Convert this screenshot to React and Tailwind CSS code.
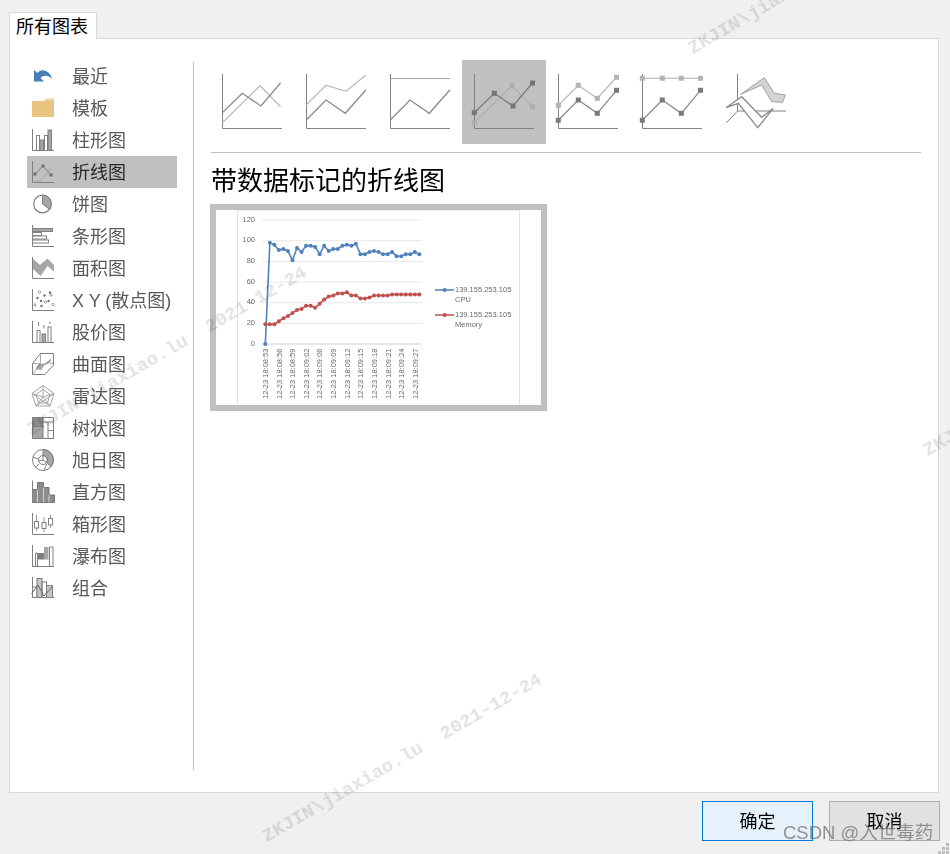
import React from 'react';

const CPU = [0, 98, 96, 91, 92, 90, 81, 93, 89, 95, 95, 94, 87, 95, 90, 92, 92, 95, 96, 95, 97, 87, 87, 89, 90, 89, 87, 87, 89, 85, 85, 87, 87, 89, 87];
const MEMORY = [19, 19, 19, 22, 25, 27, 30, 33, 34, 37, 37, 35, 39, 43, 46, 47, 49, 49, 50, 47, 47, 44, 44, 45, 47, 47, 47, 47, 48, 48, 48, 48, 48, 48, 48];
const TIMES = ['08:53', '08:56', '08:59', '09:02', '09:06', '09:09', '09:12', '09:15', '09:18', '09:21', '09:24', '09:27'];
const TICKS = [120, 100, 80, 60, 40, 20, 0];

const DARK = '#808080';
const MID = '#a6a6a6';

// small list icons, all on a 32x32 box
const Ico = ({ children }) => (
    <svg width="32" height="32" viewBox="0 0 32 32" fill="none" stroke={DARK} strokeWidth="1" className="shrink-0">
        {children}
    </svg>
);

const Axis = () => <path d="M5.5 5V26.5H27" />;

const ICONS = {
    recent: (
        <Ico><path d="M7 10V21.5H17L13.5 18C15 15.5 21 14 25 19C24 12 15 7 10.5 13Z" fill="#4a7ebb" stroke="none" /></Ico>
    ),
    folder: (
        <Ico><path d="M5 9H15.5L19 6H27V25H5Z" fill="#e9c481" stroke="none" /><path d="M16 8.5L19.5 7H26.5" stroke="#fff" /></Ico>
    ),
    bar: (
        <Ico>
            <Axis />
            <rect x="9.5" y="11.5" width="3" height="15" />
            <rect x="13" y="16" width="3.5" height="10.5" fill={MID} />
            <rect x="17.5" y="11.5" width="3" height="15" />
            <rect x="21" y="6" width="3.5" height="20.5" fill={MID} />
        </Ico>
    ),
    line: (
        <Ico>
            <Axis />
            <path d="M8 26L15 24L24 12" stroke={MID} />
            <path d="M8 18L16 10L24 19" />
            <rect x="6.5" y="16.5" width="3" height="3" fill="#6f6f6f" stroke="none" />
            <rect x="14.5" y="8.5" width="3" height="3" fill="#6f6f6f" stroke="none" />
            <rect x="22.5" y="17.5" width="3" height="3" fill="#6f6f6f" stroke="none" />
        </Ico>
    ),
    pie: (
        <Ico>
            <circle cx="15.5" cy="16" r="8.8" strokeWidth="1.2" />
            <path d="M15.5 16V7.2A8.8 8.8 0 0 1 22.5 21.3Z" fill={MID} />
        </Ico>
    ),
    hbar: (
        <Ico>
            <Axis />
            <rect x="5.5" y="8.5" width="20" height="3" fill={MID} />
            <rect x="5.5" y="12.5" width="9" height="3" />
            <rect x="5.5" y="16" width="14" height="3" fill="#fff" />
            <rect x="5.5" y="20" width="16" height="3" fill="#fff" />
        </Ico>
    ),
    area: (
        <Ico>
            <path d="M5.5 6.5L13 13L20.5 6.5L27 13V19.5L20.5 14L13.5 24L5.5 16.5Z" fill={MID} stroke="none" />
            <Axis />
        </Ico>
    ),
    scatter: (
        <Ico>
            <Axis />
            <g fill="#6f6f6f" stroke="none">
                <circle cx="10.5" cy="14" r="1.2" /><circle cx="17.5" cy="11.5" r="1.2" /><circle cx="14" cy="17" r="1.2" />
                <circle cx="21.5" cy="17" r="1.2" /><circle cx="14.5" cy="22" r="1.2" /><circle cx="23" cy="8.5" r="1.2" />
            </g>
            <g strokeWidth="0.7">
                <circle cx="12.5" cy="8" r="1.2" /><circle cx="24" cy="11" r="1.2" /><circle cx="18.5" cy="18" r="1.2" />
                <circle cx="8" cy="21" r="1.2" /><circle cx="26" cy="20.5" r="1.2" />
            </g>
        </Ico>
    ),
    stock: (
        <Ico>
            <Axis />
            <rect x="10" y="14.5" width="3" height="12" />
            <rect x="15" y="18" width="3.5" height="8.5" fill={MID} />
            <rect x="21" y="11" width="3" height="15.5" />
            <path d="M11.5 6V10M17 9V12.5M23 5.5V8" />
        </Ico>
    ),
    surface: (
        <Ico>
            <path d="M5.5 15.5L13.5 5.5H26.5V17L18 26.5H5.5Z" />
            <path d="M13.5 5.5V15.5H26.5M5.5 15.5H13.5" strokeWidth="0.7" />
            <path d="M8 21.5L11.5 14.5L17 15.5L25 9.5L23.5 15L17 18L14.5 22.5Z" fill={MID} stroke="#fff" strokeWidth="0.8" />
            <path d="M5.5 26.5L13.5 15.5" strokeWidth="0.7" />
        </Ico>
    ),
    radar: (
        <Ico>
            <g stroke="#a6a6a6">
                <path d="M16 5.5L27 13.5L23 26H9L5 13.5Z" />
                <path d="M16 9.5L23 14.5L20.5 23H11.5L9 14.5Z" />
                <path d="M16 5.5V17M27 13.5L16 17M23 26L16 17M9 26L16 17M5 13.5L16 17" />
                <path d="M5 13.5L23 26M27 13.5L9 26" />
            </g>
        </Ico>
    ),
    tree: (
        <Ico>
            <rect x="5.5" y="5.5" width="21" height="21" />
            <rect x="5.5" y="5.5" width="10.5" height="9" fill="#8c8c8c" />
            <rect x="5.5" y="14.5" width="10.5" height="12" fill={MID} />
            <path d="M16 10H26.5M21 10V26.5M21 18.5H26.5" />
        </Ico>
    ),
    sunburst: (
        <Ico>
            <circle cx="16" cy="16" r="10.5" />
            <path d="M16 5.5A10.5 10.5 0 0 1 24 22.5L19.5 18.5A4.5 4.5 0 0 0 16 11.5Z" fill={MID} />
            <circle cx="16" cy="16" r="4.5" />
            <path d="M16 11.5V16L19.5 18.5M16 16L11.5 17M12 20L8 23.5M19.5 20L17 26.5M6 13L11.5 15" />
        </Ico>
    ),
    hist: (
        <Ico>
            <path d="M5.5 13.5H10.5V6.5H16.5V11.5H22V19H27.5V26.5H5.5Z" fill="#8c8c8c" stroke="#777" />
            <path d="M10.5 13.5V26.5M16.5 11.5V26.5M22 19V26.5" stroke="#d0d0d0" />
            <path d="M5.5 4.5V27" />
        </Ico>
    ),
    box: (
        <Ico>
            <Axis />
            <path d="M9.5 7V23M17 9V24.5M23.5 7V20" strokeWidth="0.8" />
            <rect x="7.5" y="13.5" width="4" height="6.5" fill="#fff" />
            <rect x="15" y="14.5" width="4" height="6" fill="#fff" />
            <rect x="21.5" y="10.5" width="4" height="6.5" fill="#fff" />
        </Ico>
    ),
    waterfall: (
        <Ico>
            <path d="M5.5 5V26.5H27" />
            <path d="M8.5 26.5V13H10.5V26.5" />
            <rect x="10.5" y="13" width="7" height="6.5" fill="#808080" stroke="none" />
            <rect x="17" y="7" width="4.5" height="12.5" fill={MID} stroke="none" />
            <path d="M22.5 26.5V7H26V26.5" />
        </Ico>
    ),
    combo: (
        <Ico>
            <path d="M5.5 5V25.5H27" />
            <rect x="5.5" y="15" width="4.5" height="10.5" />
            <rect x="10" y="6.5" width="5" height="19" fill="#c6c6c6" />
            <rect x="15" y="10" width="4.5" height="15.5" />
            <rect x="19.5" y="13.5" width="6" height="12" fill="#c6c6c6" />
            <path d="M4.5 22L11 13L17 24L25 15" stroke="#666" />
        </Ico>
    ),
};

const NAV = [
    ['recent', '最近'],
    ['folder', '模板'],
    ['bar', '柱形图'],
    ['line', '折线图'],
    ['pie', '饼图'],
    ['hbar', '条形图'],
    ['area', '面积图'],
    ['scatter', 'X Y (散点图)'],
    ['stock', '股价图'],
    ['surface', '曲面图'],
    ['radar', '雷达图'],
    ['tree', '树状图'],
    ['sunburst', '旭日图'],
    ['hist', '直方图'],
    ['box', '箱形图'],
    ['waterfall', '瀑布图'],
    ['combo', '组合'],
];

const Markers = ({ pts, fill }) =>
    pts.map(([x, y]) => <rect key={x} x={x - 2.5} y={y - 2.5} width="5" height="5" fill={fill} />);

const toLine = (pts) => pts.map((p) => p.join(',')).join(' ');

const DARK_A = [[12.3, 52.7], [32.3, 33.3], [51, 46], [70.5, 23]];
const LIGHT_A = [[12.3, 62.7], [50, 25.7], [70.5, 46.7]];
const DARK_B = [[12.3, 60.3], [32.3, 40], [51.3, 53.3], [70.5, 30.3]];
const LIGHT_B = [[12.3, 45.3], [32.3, 25.3], [51.3, 38.3], [70.5, 17.3]];
const LIGHT_C = [[12.3, 18.3], [32.3, 18.3], [51.3, 18.3], [70.5, 18.3]];

const Thumb = ({ selected, children, noAxis }) => (
    <div className={selected ? 'w-[84px] h-[84px] bg-[#c0c0c0]' : 'w-[84px] h-[84px]'}>
        <svg width="84" height="84" viewBox="0 0 84 84" fill="none" strokeWidth="1.3">
            {!noAxis && <path d="M12.5 14V68.5H72" stroke="#808080" strokeWidth="1" />}
            {children}
        </svg>
    </div>
);

const Thumbs = () => (
    <div className="flex">
        <Thumb>
            <polyline points={toLine(LIGHT_A)} stroke="#bdbdbd" />
            <polyline points={toLine(DARK_A)} stroke="#8a8a8a" />
        </Thumb>
        <Thumb>
            <polyline points="12.3,45 32,25.3 52,31.3 72,15" stroke="#bdbdbd" />
            <polyline points="12.3,60 32,40 51.3,53.3 72,29.7" stroke="#8a8a8a" />
        </Thumb>
        <Thumb>
            <path d="M12.5 18.5H72" stroke="#a6a6a6" strokeWidth="1" />
            <polyline points="12.3,60 32,40 51.3,53.3 72,29.7" stroke="#8a8a8a" />
        </Thumb>
        <Thumb selected>
            <polyline points={toLine(LIGHT_A)} stroke="#b0b0b0" />
            <polyline points={toLine(DARK_A)} stroke="#7a7a7a" />
            <Markers pts={LIGHT_A} fill="#adadad" />
            <Markers pts={DARK_A} fill="#757575" />
        </Thumb>
        <Thumb>
            <polyline points={toLine(LIGHT_B)} stroke="#bdbdbd" />
            <polyline points={toLine(DARK_B)} stroke="#8a8a8a" />
            <Markers pts={LIGHT_B} fill="#b3b3b3" />
            <Markers pts={DARK_B} fill="#7a7a7a" />
        </Thumb>
        <Thumb>
            <polyline points={toLine(LIGHT_C)} stroke="#bdbdbd" />
            <polyline points={toLine(DARK_B)} stroke="#8a8a8a" />
            <Markers pts={LIGHT_C} fill="#b3b3b3" />
            <Markers pts={DARK_B} fill="#7a7a7a" />
        </Thumb>
        <Thumb noAxis>
            <path d="M23.5 14V51H72M23.5 51L12 63" stroke="#808080" strokeWidth="1" />
            <path d="M26.7 34.3L50.3 17.7L60.3 33.3L71.3 35L68.7 42.3L57.7 41.7L47.7 25Z" fill="#d4d4d4" stroke="#a0a0a0" strokeWidth="1" />
            <path d="M12 47.7L27.7 36.7L47.7 57.3L59.3 48.3L43.7 67.7L24.3 43.3Z" fill="#fff" stroke="#8c8c8c" />
        </Thumb>
    </div>
);

const px = (i) => 49.3 + i * 4.53;
const py = (v) => 134 - v * 1.033;

const Series = ({ data, color }) => (
    <>
        <polyline points={data.map((v, i) => `${px(i)},${py(v)}`).join(' ')} fill="none" stroke={color} strokeWidth="1.6" />
        {data.map((v, i) => <circle key={i} cx={px(i)} cy={py(v)} r="2" fill={color} />)}
    </>
);

const Preview = () => (
    <div className="mt-[6px] w-[337px] h-[207px] border-[6px] border-[#c0c0c0] bg-white">
        <svg width="325" height="195" viewBox="0 0 325 195" className="blur-[0.5px]" fontFamily="'Liberation Sans', sans-serif" fontSize="7.5" fill="#6a6a6a">
            <path d="M21.5 0V195M303.5 0V195" stroke="#e2e2e2" />
            <path d="M21.5 0.5H303.5" stroke="#eeeeee" />
            {TICKS.map((t) => (
                <g key={t}>
                    <path d={`M46 ${py(t)}H206`} stroke={t === 0 ? '#d0d0d0' : '#e8e8e8'} />
                    <text x="39" y={py(t) + 1.5} textAnchor="end">{t}</text>
                </g>
            ))}
            {TIMES.map((t, i) => (
                <text key={t} transform={`translate(${52 + i * 13.62},189) rotate(-90)`}>12-23 18:{t}</text>
            ))}
            <Series data={CPU} color="#4f81bd" />
            <Series data={MEMORY} color="#c0504d" />
            <path d="M219 80H238" stroke="#4f81bd" strokeWidth="1.5" />
            <circle cx="228.7" cy="80" r="2" fill="#4f81bd" />
            <text x="239" y="82">139.155.253.105</text>
            <text x="239" y="92">CPU</text>
            <path d="M219 105H238" stroke="#c0504d" strokeWidth="1.5" />
            <circle cx="228.7" cy="105" r="2" fill="#c0504d" />
            <text x="239" y="107">139.155.253.105</text>
            <text x="239" y="117">Memory</text>
        </svg>
    </div>
);

// the diagonal stamp that lies over the whole dialog
const Stamp = ({ className }) => (
    <span className={`absolute origin-left -rotate-[30deg] whitespace-pre pointer-events-none mix-blend-multiply text-[19px] leading-5 font-bold text-[#e2e2e2] blur-[0.4px] [font-family:'Liberation_Mono',monospace] ${className}`}>
        {'ZKJIN\\jiaxiao.lu  2021-12-24'}
    </span>
);

export default function App() {
    return (
        <div className="relative w-[950px] h-[854px] overflow-hidden flex flex-col bg-[#f0f0f0] [font-family:'Liberation_Sans','Noto_Sans_CJK_SC',sans-serif]">
            <div className="pl-[9px] pt-[12px] h-[39px] shrink-0">
                <div className="relative z-10 w-[88px] h-[27px] border border-b-0 border-[#d9d9d9] bg-white text-[18px] leading-[28px] text-black pl-[6px]">
                    所有图表
                </div>
            </div>

            <div className="-mt-px ml-[9px] w-[930px] h-[755px] shrink-0 border border-[#d9d9d9] bg-white flex">
                <nav className="ml-[17px] mt-[21px] w-[150px] shrink-0 flex flex-col">
                    {NAV.map(([key, label]) => (
                        <div key={key} className={key === 'line' ? 'h-8 flex items-center bg-[#c0c0c0] text-[#262626]' : 'h-8 flex items-center text-[#595959]'}>
                            {ICONS[key]}
                            <span className="ml-[13px] h-8 text-[18px] leading-[34px] whitespace-nowrap">{label}</span>
                        </div>
                    ))}
                </nav>

                <div className="ml-[16px] mt-[23px] w-px h-[708px] shrink-0 bg-[#c0c0c0]" />

                <div className="ml-[16px] mt-[21px] flex flex-col">
                    <Thumbs />
                    <div className="mt-[8px] ml-px w-[710px] h-px bg-[#c0c0c0]" />
                    <h1 className="mt-[9px] h-[36px] ml-px text-[26px] leading-[38px] font-normal text-black">带数据标记的折线图</h1>
                    <Preview />
                </div>
            </div>

            <div className="mt-[8px] flex justify-end gap-[16px] pr-[10px]">
                <button className="w-[111px] h-[40px] pt-[2px] border border-[#0078d7] bg-[#e5f1fb] text-[18px] text-black">确定</button>
                <button className="w-[111px] h-[40px] pt-[2px] border border-[#adadad] bg-[#e1e1e1] text-[18px] text-black">取消</button>
            </div>

            <Stamp className="left-[264px] top-[828px]" />
            <Stamp className="left-[29px] top-[421px]" />
            <Stamp className="left-[690px] top-[40px]" />
            <Stamp className="left-[925px] top-[442px]" />

            <span className="absolute left-[783px] top-[819px] text-[18.5px] leading-7 text-[#7a7a7a]/80 whitespace-nowrap pointer-events-none">
                CSDN @入世毒药
            </span>

            <svg width="12" height="12" viewBox="0 0 12 12" fill="#bdbdbd" className="absolute right-0 bottom-0">
                <rect x="8" y="1" width="3" height="3" />
                <rect x="4" y="5" width="3" height="3" />
                <rect x="8" y="5" width="3" height="3" />
                <rect x="0" y="9" width="3" height="3" />
                <rect x="4" y="9" width="3" height="3" />
                <rect x="8" y="9" width="3" height="3" />
            </svg>
        </div>
    );
}
